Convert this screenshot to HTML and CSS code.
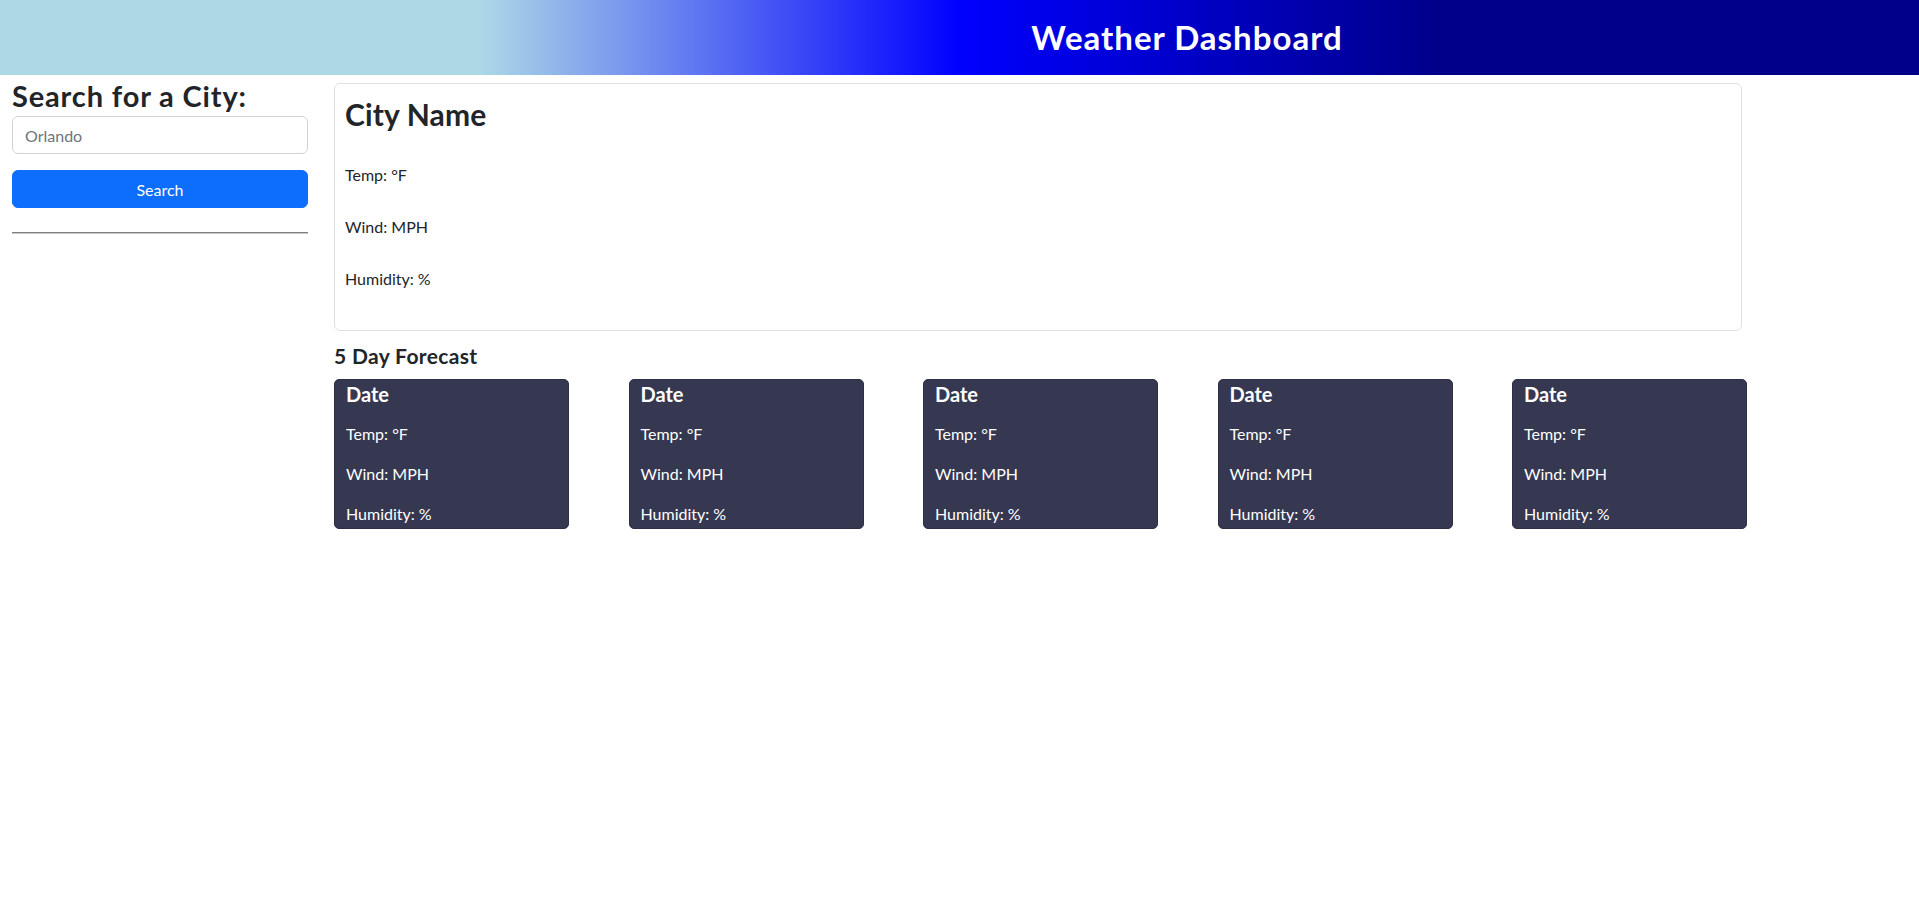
FILE: index.html
```html
<!DOCTYPE html>
<html lang="en">
<head>
<meta charset="utf-8">
<title>Weather Dashboard</title>
<link rel="stylesheet" href="styles.css">
</head>
<body>
<header class="site-header">
  <h1 class="site-title">Weather Dashboard</h1>
</header>
<div class="layout">
  <aside class="sidebar">
    <h3 class="search-title">Search for a City:</h3>
    <input class="search-input" type="text" placeholder="Orlando">
    <button class="search-btn" type="button">Search</button>
    <hr class="divider">
  </aside>
  <main class="content">
    <section class="current-card">
      <h2 class="city-name">City Name</h2>
      <p class="stat">Temp: °F</p>
      <p class="stat">Wind: MPH</p>
      <p class="stat">Humidity: %</p>
    </section>
    <h5 class="forecast-title">5 Day Forecast</h5>
    <div class="forecast-row">
      <div class="day-card">
        <h5 class="day-date">Date</h5>
        <p class="day-stat">Temp: °F</p>
        <p class="day-stat">Wind: MPH</p>
        <p class="day-stat">Humidity: %</p>
      </div>
      <div class="day-card">
        <h5 class="day-date">Date</h5>
        <p class="day-stat">Temp: °F</p>
        <p class="day-stat">Wind: MPH</p>
        <p class="day-stat">Humidity: %</p>
      </div>
      <div class="day-card">
        <h5 class="day-date">Date</h5>
        <p class="day-stat">Temp: °F</p>
        <p class="day-stat">Wind: MPH</p>
        <p class="day-stat">Humidity: %</p>
      </div>
      <div class="day-card">
        <h5 class="day-date">Date</h5>
        <p class="day-stat">Temp: °F</p>
        <p class="day-stat">Wind: MPH</p>
        <p class="day-stat">Humidity: %</p>
      </div>
      <div class="day-card">
        <h5 class="day-date">Date</h5>
        <p class="day-stat">Temp: °F</p>
        <p class="day-stat">Wind: MPH</p>
        <p class="day-stat">Humidity: %</p>
      </div>
    </div>
  </main>
</div>
</body>
</html>
```
FILE: styles.css
```css
* { box-sizing: border-box; }

html, body {
  margin: 0;
  padding: 0;
  background: #ffffff;
  color: #212529;
  font-family: Lato, "Liberation Sans", Arial, sans-serif;
  font-size: 16px;
  line-height: 1.5;
}

.site-header {
  height: 75px;
  display: flex;
  align-items: center;
  justify-content: center;
  padding-left: 455px;
  background: linear-gradient(to right, lightblue, lightblue, blue, darkblue, darkblue);
}

.site-title {
  margin: 0;
  color: #ffffff;
  font-size: 33px;
  font-weight: 700;
  line-height: 1.2;
  letter-spacing: 1px;
}

.layout {
  display: flex;
  align-items: flex-start;
}

.sidebar {
  flex: 0 0 320px;
  padding: 4px 12px 0 12px;
  display: flex;
  flex-direction: column;
}

.search-title {
  margin: 0 0 3px 0;
  font-size: 29px;
  font-weight: 700;
  line-height: 34px;
  letter-spacing: 0.85px;
  color: #212529;
}

.search-input {
  width: 100%;
  height: 38px;
  padding: 6px 12px;
  border: 1px solid #ced4da;
  border-radius: 6px;
  font-family: inherit;
  font-size: 16px;
  color: #212529;
  background: #fff;
}

.search-input::placeholder {
  color: #6c757d;
}

.search-btn {
  margin-top: 16px;
  width: 100%;
  height: 38px;
  border: 1px solid #0d6efd;
  border-radius: 6px;
  background: #0d6efd;
  color: #fff;
  font-family: inherit;
  font-size: 16px;
  cursor: pointer;
}

.divider {
  width: 100%;
  margin: 24px 0 0 0;
  border: 0;
  border-top: 1px solid #808080;
  border-bottom: 1px solid #c8c8c8;
  height: 0;
}

.content {
  flex: 0 0 1427px;
  padding: 8px 0 0 14px;
}

.current-card {
  margin-right: 5px;
  border: 1px solid #dee2e6;
  border-radius: 6px;
  padding: 12px 10px 11px 10px;
}

.city-name {
  margin: 0 0 31px 0;
  font-size: 30px;
  font-weight: 700;
  line-height: 36px;
  letter-spacing: 0.15px;
}

.stat {
  margin: 0 0 28px 0;
  line-height: 24px;
}

.forecast-title {
  margin: 12px 0 11px 0;
  font-size: 21px;
  font-weight: 700;
  line-height: 25px;
  letter-spacing: 0.35px;
}

.forecast-row {
  display: flex;
  justify-content: space-between;
}

.day-card {
  width: 235px;
  height: 150px;
  overflow: hidden;
  background: #353850;
  border: 1px solid #2c2f45;
  border-radius: 5px;
  color: #ffffff;
  padding: 2px 11px 0 11px;
}

.day-date {
  margin: 0 0 16px 0;
  font-size: 20px;
  font-weight: 700;
  line-height: 24px;
}

.day-stat {
  margin: 0 0 16px 0;
  line-height: 24px;
}
```
